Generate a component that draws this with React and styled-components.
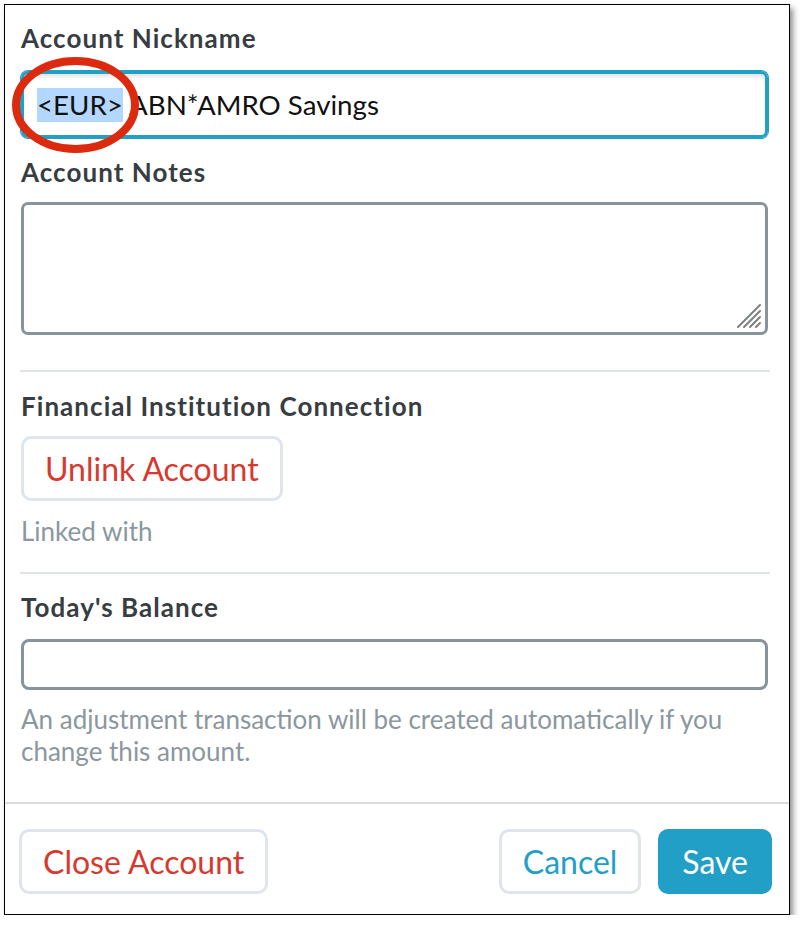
import React from 'react';
import styled, { createGlobalStyle } from 'styled-components';

const GlobalStyle = createGlobalStyle`
    * {
        box-sizing: border-box;
    }
    body {
        margin: 0;
        background: #fff;
        font-family: Lato, "Open Sans", sans-serif;
    }
`;

const Frame = styled.div`
    margin: 4px 0 0 4px;
    width: 786px;
    border: 1px solid #000;
    background: #fff;
    box-shadow: 3px 4px 6px rgba(0, 0, 0, 0.45);
`;

const Body = styled.div`
    padding: 18px 21px 35px 16px;
`;

const Label = styled.div`
    font-size: 26px;
    line-height: 30px;
    font-weight: 700;
    letter-spacing: 1.05px;
    color: #383d42;
    margin-top: ${props => props.top || 0}px;
    margin-bottom: ${props => props.bottom || 16}px;
`;

const InputWrap = styled.div`
    position: relative;
`;

const NicknameBox = styled.div`
    height: 67px;
    border: 3px solid #229fc6;
    border-radius: 7px;
    box-shadow: 0 0 0 1px #229fc6, inset 0 4px 6px -3px rgba(0, 0, 0, 0.18);
    display: flex;
    align-items: center;
    padding-left: 13px;
    font-size: 27.7px;
    color: #111;
`;

const Selected = styled.span`
    background: #b3d7fe;
    line-height: 34px;
`;

const Annotation = styled.svg`
    position: absolute;
    left: -13px;
    top: -17px;
    pointer-events: none;
`;

const NotesBox = styled.div`
    position: relative;
    height: 133px;
    border: 3px solid #87949b;
    border-radius: 7px;
`;

const Grip = styled.svg`
    position: absolute;
    right: 3px;
    bottom: 3px;
`;

const Divider = styled.div`
    height: 2px;
    background: #e1e5e8;
    margin: ${props => props.top}px 0 0 -1px;
    width: calc(100% + 3px);
`;

const GhostButton = styled.button`
    height: 65px;
    padding: 0 21px;
    background: #fff;
    border: 3px solid #dfe5ea;
    border-radius: 10px;
    font-family: inherit;
    font-size: 32px;
    color: ${props => props.color};
    cursor: pointer;
`;

const SaveButton = styled.button`
    height: 65px;
    padding: 0 24px;
    background: #229fc6;
    border: none;
    border-radius: 10px;
    font-family: inherit;
    font-size: 32px;
    color: #fff;
    cursor: pointer;
`;

const Muted = styled.div`
    font-size: 26px;
    line-height: ${props => props.lh || 30}px;
    color: #8b979e;
    margin-top: ${props => props.top || 0}px;
`;

const BalanceBox = styled.div`
    height: 51px;
    border: 3px solid #87949b;
    border-radius: 8px;
`;

const Footer = styled.div`
    border-top: 2px solid #dcdcdc;
    padding: 25px 17px 20px 14px;
    display: flex;
    align-items: center;
`;

const Spacer = styled.div`
    flex: 1;
`;

const ButtonGroup = styled.div`
    display: flex;
    gap: 17px;
`;

function App() {
    return (
        <Frame>
            <GlobalStyle />
            <Body>
                <Label bottom={18}>Account Nickname</Label>
                <InputWrap>
                    <NicknameBox>
                        <Selected>&lt;EUR&gt;</Selected>&nbsp;ABN*AMRO Savings
                    </NicknameBox>
                    <Annotation width="160" height="110" viewBox="0 0 160 110">
                        <ellipse cx="67.5" cy="51" rx="59.5" ry="44" fill="none" stroke="#dc2a0f" strokeWidth="8" />
                    </Annotation>
                </InputWrap>

                <Label top={19} bottom={15}>Account Notes</Label>
                <NotesBox>
                    <Grip width="26" height="26" viewBox="0 0 26 26">
                        <g stroke="#7a7f83" strokeWidth="2" strokeLinecap="round">
                            <line x1="2" y1="24" x2="24" y2="2" />
                            <line x1="8" y1="24" x2="24" y2="8" />
                            <line x1="14" y1="24" x2="24" y2="14" />
                            <line x1="20" y1="24" x2="24" y2="20" />
                        </g>
                    </Grip>
                </NotesBox>

                <Divider top={35} />
                <Label top={19} bottom={15}>Financial Institution Connection</Label>
                <GhostButton color="#d63a2f">Unlink Account</GhostButton>
                <Muted top={15}>Linked with</Muted>

                <Divider top={26} />
                <Label top={18} bottom={17}>Today's Balance</Label>
                <BalanceBox />
                <Muted top={13} lh={32}>
                    An adjustment transaction will be created automatically if you change this amount.
                </Muted>
            </Body>
            <Footer>
                <GhostButton color="#d63a2f">Close Account</GhostButton>
                <Spacer />
                <ButtonGroup>
                    <GhostButton color="#229fc6">Cancel</GhostButton>
                    <SaveButton>Save</SaveButton>
                </ButtonGroup>
            </Footer>
        </Frame>
    );
}

export default App;
